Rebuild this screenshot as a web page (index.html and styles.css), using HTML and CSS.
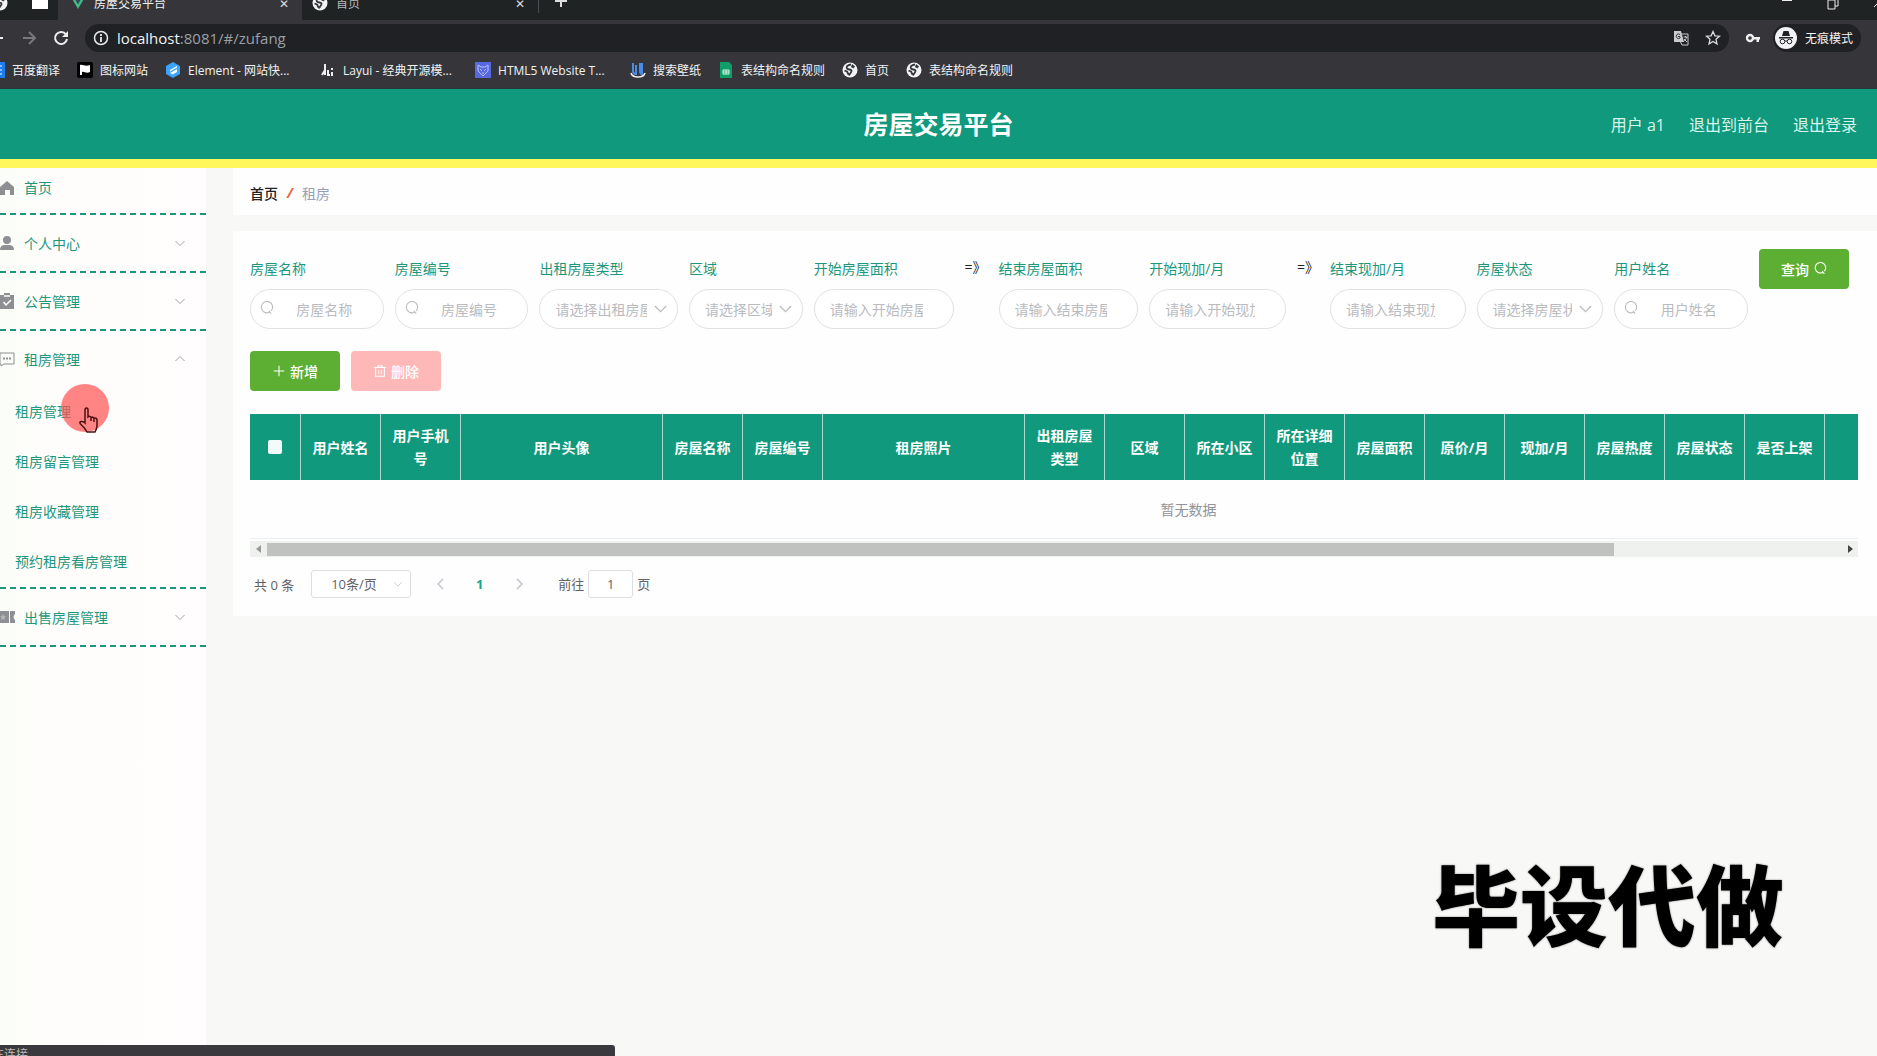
FILE: index.html
```html
<!DOCTYPE html>
<html lang="zh-CN">
<head>
<meta charset="utf-8">
<title>房屋交易平台</title>
<link rel="stylesheet" href="styles.css">
</head>
<body>
<svg class="sprite" aria-hidden="true">
  <symbol id="globe" viewBox="0 0 16 16"><circle cx="8" cy="8" r="7.500" fill="#f1f3f4"/><path d="M9 2.500C5 3 4 5 5 6.500s4 .5 4.500 2S8 11 7 13.500M2.500 8.500l2.500 1 1.500 3" fill="none" stroke="#35363a" stroke-width="1.800"/><path d="M10 2l3 2.500-1.500 2L9 5z" fill="#35363a"/></symbol>
  <symbol id="search" viewBox="0 0 16 16"><path d="M11 12A6 6 0 1 1 13 10.500M10.500 10.500l2.500 3" fill="none" stroke="currentColor" stroke-width="1.200"/></symbol>
  <symbol id="down" viewBox="0 0 12 12"><path d="M1.500 4L6 8.500 10.500 4" fill="none" stroke="currentColor"/></symbol>
  <symbol id="up" viewBox="0 0 12 12"><path d="M1.500 8L6 3.500 10.500 8" fill="none" stroke="currentColor"/></symbol>
</svg>

<div class="browser">
  <div class="tabstrip">
    <div class="tabrow">
      <div class="pinned"><svg class="ic16"><use href="#globe"/></svg><span class="divider"></span><svg class="ic16" viewBox="0 0 16 16"><path d="M0 2h6l1 2h9v10H0z" fill="#fff"/></svg></div>
      <div class="tab tab-active"><svg class="ic16" viewBox="0 0 16 16"><path d="M1 2h3l4 7 4-7h3L8 14z" fill="#41b883"/><path d="M4 2h2.500L8 5l1.500-3H12L8 9z" fill="#35495e"/></svg><span class="tab-title">房屋交易平台</span><button class="plain" aria-label="关闭标签">✕</button></div>
      <div class="tab"><svg class="ic16"><use href="#globe"/></svg><span class="tab-title dim">首页</span><button class="plain" aria-label="关闭标签">✕</button></div>
      <span class="divider"></span>
      <button class="plain newtab" aria-label="新标签页"><svg width="14" height="14" viewBox="0 0 14 14"><path d="M7 1v12M1 7h12" stroke="#ddd" stroke-width="2"/></svg></button>
      <div class="winbtns"><svg width="12" height="12" viewBox="0 0 12 12"><path d="M1 4h10" stroke="#eee" stroke-width="2"/></svg><svg width="12" height="14" viewBox="0 0 12 14"><path d="M1 4h7v9H1zM4 4V1h7v9H8" stroke="#eee" fill="none"/></svg><svg width="12" height="12" viewBox="0 0 12 12"><path d="M1 1l10 10M11 1L1 11" stroke="#eee"/></svg></div>
    </div>
  </div>
  <div class="toolbar">
    <svg class="nav back" viewBox="0 0 16 16"><path d="M14 8H2M8 2L2 8l6 6" stroke="#eee" stroke-width="2" fill="none"/></svg>
    <svg class="nav" viewBox="0 0 16 16"><path d="M2 8h12M8 2l6 6-6 6" stroke="#77797c" stroke-width="2" fill="none"/></svg>
    <svg class="nav" viewBox="0 0 16 16"><path d="M13 4.500A6 6 0 1 0 14 9" stroke="#eee" stroke-width="2" fill="none"/><path d="M15 1v6H9z" fill="#eee"/></svg>
    <div class="omnibox">
      <svg class="ic16" viewBox="0 0 16 16"><circle cx="8" cy="8" r="6.500" fill="none" stroke="#e8eaed" stroke-width="1.500"/><path d="M8 7v5M8 4v2" stroke="#e8eaed" stroke-width="1.800"/></svg>
      <span class="url"><b>localhost</b>:8081/#/zufang</span>
      <svg class="ic16" viewBox="0 0 16 16"><path d="M1 1h7l3 11H1z" fill="#c8cacd"/><path d="M8.500 4H15v11H9l-1.500-3" fill="none" stroke="#c8cacd"/><path d="M7 4.500A2.300 2.300 0 1 0 7 8V6.500H5" stroke="#35363a" fill="none"/><path d="M10.500 7h4M12.500 6v1M13.500 7c0 2-2 4-2.500 4M11 9l3 3" stroke="#c8cacd" fill="none"/></svg>
      <svg class="ic16" viewBox="0 0 16 16"><path d="M8 1.500l1.900 4.300 4.600.4-3.500 3.100 1 4.600L8 11.500l-4 2.400 1-4.600L1.500 6.200l4.600-.4z" fill="none" stroke="#dadce0" stroke-width="1.300"/></svg>
    </div>
    <svg class="ic16" viewBox="0 0 16 16"><circle cx="5" cy="8" r="3" fill="none" stroke="#eee" stroke-width="2.400"/><path d="M8 7h7v2.500h-1V12h-2.500V9.500H8z" fill="#eee"/></svg>
    <div class="incognito"><svg width="22" height="22" viewBox="0 0 22 22"><circle cx="11" cy="11" r="11" fill="#f1f3f4"/><path d="M7 9l1.500-5h5L15 9zM4 10h14v1.500H4z" fill="#202124"/><circle cx="7.500" cy="14.500" r="2.300" fill="none" stroke="#202124"/><circle cx="14.500" cy="14.500" r="2.300" fill="none" stroke="#202124"/><path d="M10 14h2" stroke="#202124"/></svg><span>无痕模式</span></div>
  </div>
  <nav class="bookmarks" aria-label="书签">
    <a href="#"><svg class="ic16" viewBox="0 0 16 16"><rect width="16" height="16" fill="#1a7df0"/><path d="M7 4h6M7 8h6M9 12h4" stroke="#fff"/></svg>百度翻译</a>
    <a href="#"><svg class="ic16" viewBox="0 0 16 16"><rect width="16" height="16" rx="2" fill="#000"/><path d="M3 13V3c3-1 5 2 10 0v7c-4 2-6-1-8 0v3z" fill="#fff"/></svg>图标网站</a>
    <a href="#" class="wide"><svg class="ic16" viewBox="0 0 16 16"><path d="M8 0l7 4v8l-7 4-7-4V4z" fill="#3ba4ff"/><path d="M12 4L5 8v1.500l7-4zM12 7l-7 4 2.500 1.500L12 10z" fill="#fff"/></svg>Element - 网站快...</a>
    <a href="#" class="wide"><svg class="ic16" viewBox="0 0 16 16"><path d="M5 2v11M2 13l3-5M8 13V8M12 6v2M12 10v4M7 13h3" stroke="#eee" stroke-width="2" fill="none"/></svg>Layui - 经典开源模...</a>
    <a href="#" class="wide"><svg class="ic16" viewBox="0 0 16 16"><rect width="16" height="16" fill="#5868e0"/><path d="M3 3l3 2h4l3-2v6l-5 5-5-5zM5 7l2 2M11 7L9 9M7 11h2" fill="none" stroke="#b7c4ff"/></svg>HTML5 Website T...</a>
    <a href="#"><svg class="ic16" viewBox="0 0 16 16"><path d="M3 1v8q0 3 3 3V3M10 1v8q0 3 2 3V1" stroke="#4b8be8" stroke-width="2" fill="none"/><path d="M1 11q1 4 7 4t7-4" stroke="#eee" stroke-width="1.500" fill="none"/></svg>搜索壁纸</a>
    <a href="#"><svg class="ic16" viewBox="0 0 16 16"><path d="M2 0h9l3 3v13H2z" fill="#0f9d68"/><path d="M5 8h6v4H5zM8 8v4M5 10h6" fill="none" stroke="#d8f5e8"/></svg>表结构命名规则</a>
    <a href="#"><svg class="ic16"><use href="#globe"/></svg>首页</a>
    <a href="#"><svg class="ic16"><use href="#globe"/></svg>表结构命名规则</a>
  </nav>
</div>

<header class="site-header">
  <h1>房屋交易平台</h1>
  <div class="user-links"><span>用户 a1</span><a href="#">退出到前台</a><a href="#">退出登录</a></div>
</header>

<div class="layout">
  <aside class="sidebar">
    <ul class="menu">
      <li class="menu-home"><a class="menu-title" href="#"><svg class="mi" viewBox="0 0 18 18"><path d="M9 3l7 6v8h-4v-5H7v5H2V9z" fill="#8d8f92"/></svg>首页</a></li>
      <li><a class="menu-title" href="#"><svg class="mi" viewBox="0 0 18 18"><circle cx="9" cy="6" r="4" fill="#8d8f92"/><path d="M2 16q0-5 5-5h4q5 0 5 5z" fill="#8d8f92"/></svg>个人中心<svg class="arrow"><use href="#down"/></svg></a></li>
      <li><a class="menu-title" href="#"><svg class="mi" viewBox="0 0 18 18"><path d="M2 3h4V1h6v2h4v14H2z" fill="#8d8f92"/><path d="M6 4h6M5.500 10l2.500 3 5-5" stroke="#fff" stroke-width="1.500" fill="none"/></svg>公告管理<svg class="arrow"><use href="#down"/></svg></a></li>
      <li><a class="menu-title" href="#"><svg class="mi" viewBox="0 0 18 18"><path d="M2 3h14v11H6l-3 2v-2H2z" fill="none" stroke="#8d8f92"/><path d="M5 8.500h2M8 8.500h2M11 8.500h2" stroke="#8d8f92" stroke-width="2"/></svg>租房管理<svg class="arrow"><use href="#up"/></svg></a>
        <ul class="submenu">
          <li><a href="#">租房管理</a></li>
          <li><a href="#">租房留言管理</a></li>
          <li><a href="#">租房收藏管理</a></li>
          <li><a href="#">预约租房看房管理</a></li>
        </ul></li>
      <li><a class="menu-title" href="#"><svg class="mi" viewBox="0 0 18 18"><path d="M0 3h11v12H0zM12 3h5v3q-3 3 0 6v3h-5z" fill="#8d8f92"/><path d="M5 6l1 2 2 .3-1.500 1.500.5 2.200-2-1-2 1 .5-2.200L2 8.300 4 8z" fill="#b5b5b8"/></svg>出售房屋管理<svg class="arrow"><use href="#down"/></svg></a></li>
    </ul>
  </aside>

  <main class="main">
    <nav class="crumbs" aria-label="面包屑"><a href="#">首页</a><i>/</i><span>租房</span></nav>
    <section class="panel">
      <form class="filters">
        <div class="field"><label for="f1">房屋名称</label><div class="box"><svg class="lead"><use href="#search"/></svg><input id="f1" class="with-icon" placeholder="房屋名称"></div></div>
        <div class="field"><label for="f2">房屋编号</label><div class="box"><svg class="lead"><use href="#search"/></svg><input id="f2" class="with-icon" placeholder="房屋编号"></div></div>
        <div class="field"><label for="f3">出租房屋类型</label><div class="box"><select id="f3"><option>请选择出租房屋类型</option></select><svg class="trail"><use href="#down"/></svg></div></div>
        <div class="field"><label for="f4">区域</label><div class="box"><select id="f4"><option>请选择区域</option></select><svg class="trail"><use href="#down"/></svg></div></div>
        <div class="field"><label for="f5">开始房屋面积</label><div class="box"><input id="f5" placeholder="请输入开始房屋面积"></div></div>
        <span class="to">=》</span>
        <div class="field"><label for="f6">结束房屋面积</label><div class="box"><input id="f6" placeholder="请输入结束房屋面积"></div></div>
        <div class="field"><label for="f7">开始现加/月</label><div class="box"><input id="f7" placeholder="请输入开始现加/月"></div></div>
        <span class="to">=》</span>
        <div class="field"><label for="f8">结束现加/月</label><div class="box"><input id="f8" placeholder="请输入结束现加/月"></div></div>
        <div class="field"><label for="f9">房屋状态</label><div class="box"><select id="f9"><option>请选择房屋状态</option></select><svg class="trail"><use href="#down"/></svg></div></div>
        <div class="field"><label for="f10">用户姓名</label><div class="box"><svg class="lead"><use href="#search"/></svg><input id="f10" class="with-icon" placeholder="用户姓名"></div></div>
        <button type="button" class="btn">查询<svg class="bi"><use href="#search"/></svg></button>
      </form>

      <div class="actions">
        <button type="button" class="btn"><svg class="bi" viewBox="0 0 16 16"><path d="M8 2v12M2 8h12" stroke="#fff" stroke-width="1.200"/></svg>新增</button>
        <button type="button" class="btn btn-danger" disabled><svg class="bi" viewBox="0 0 16 16"><path d="M1 4h14M3 4v10h10V4M5.500 4V2h5v2M6.500 7v4.500M9.500 7v4.500" fill="none" stroke="#fff" stroke-width="1.200"/></svg>删除</button>
      </div>

      <div class="table-wrap">
        <table>
          <colgroup><col class="c-check"><col><col><col class="c-pic"><col><col><col class="c-pic"><col><col><col><col><col><col><col><col><col><col><col class="c-ops"></colgroup>
          <thead><tr>
            <th><input type="checkbox" aria-label="全选"></th><th>用户姓名</th><th>用户手机号</th><th>用户头像</th><th>房屋名称</th><th>房屋编号</th><th>租房照片</th><th>出租房屋类型</th><th>区域</th><th>所在小区</th><th>所在详细位置</th><th>房屋面积</th><th>原价/月</th><th>现加/月</th><th>房屋热度</th><th>房屋状态</th><th>是否上架</th><th></th>
          </tr></thead>
          <tbody><tr><td colspan="18">暂无数据</td></tr></tbody>
        </table>
      </div>
      <div class="scrollbar"><span class="tri-left"></span><div class="track"><div class="thumb"></div></div><span class="tri-right"></span></div>

      <div class="pager">
        <span>共 0 条</span>
        <div class="size"><select aria-label="每页条数"><option>10条/页</option></select><svg><use href="#down"/></svg></div>
        <button class="page" aria-label="上一页"><svg width="12" height="12" viewBox="0 0 12 12"><path d="M8 1L3 6l5 5" fill="none" stroke="#c0c4cc" stroke-width="1.500"/></svg></button>
        <button class="page current">1</button>
        <button class="page" aria-label="下一页"><svg width="12" height="12" viewBox="0 0 12 12"><path d="M4 1l5 5-5 5" fill="none" stroke="#c0c4cc" stroke-width="1.500"/></svg></button>
        <label class="jump">前往<input value="1">页</label>
      </div>
    </section>
  </main>
</div>

<div class="caption">毕设代做</div>
<div class="status"><span>正在连接…</span></div>
<div class="pointer"><svg width="22" height="26" viewBox="0 0 22 26"><path d="M7 16V3q0-2 1.500-2T10 3v7q2-1.500 3 .5 2-1 3 .8 2.500-.8 3 1.200v6q0 3-2 6.500H9Q7 21 2.500 17q-1.500-2 .5-2.500T7 16zM13 11v3M16 12v3" fill="none" stroke="#4a1010" stroke-width="1.500"/></svg></div>
</body>
</html>
```
FILE: styles.css
```css
* { box-sizing: border-box; }
body {
  margin: 0;
  min-height: 100vh;
  display: flex;
  flex-direction: column;
  position: relative;
  overflow: hidden;
  background: #f8f9f7;
  font: 14px "Open Sans", "Noto Sans CJK SC", sans-serif;
  color: #606266;
}
a { color: inherit; text-decoration: none; }
button, input, select { font: inherit; margin: 0; }
ul { list-style: none; margin: 0; padding: 0; }
svg { flex: none; }
.sprite { position: absolute; width: 0; height: 0; }
.ic16 { width: 16px; height: 16px; }

/* browser chrome */
.browser { background: #36363a; color: #f1f3f4; font-size: 12px; border-bottom: 1px solid #26383a; }
.tabstrip { height: 20px; overflow: hidden; background: #202324; }
.tabrow { display: flex; align-items: center; height: 34px; margin-top: -14px; }
.pinned { display: flex; align-items: center; gap: 12px; width: 66px; margin-left: -8px; padding-right: 10px; }
.divider { width: 1px; height: 20px; background: #4a4c50; }
.tab { display: flex; align-items: center; gap: 8px; width: 236px; height: 34px; padding: 0 10px 0 10px; }
.tab-active { width: 244px; padding: 0 10px 0 12px; background: #36363a; border-radius: 8px 8px 0 0; }
.tab-title { flex: 1; }
.dim { color: #b5b8bc; }
.plain { border: 0; padding: 0; width: 16px; background: none; color: #ddd; font-size: 12px; }
.newtab { margin-left: 14px; }
.winbtns { display: flex; gap: 34px; margin-left: auto; margin-right: -8px; }
.toolbar { display: flex; align-items: center; height: 36px; padding: 0 16px 0 0; gap: 12px; }
.nav { width: 16px; height: 16px; }
.back { margin-left: -11px; }
.toolbar .nav + .nav { margin-left: 4px; margin-right: 0; }
.omnibox { flex: 1; display: flex; align-items: center; gap: 16px; height: 28px; margin: 0 4px 0 4px; padding: 0 8px; border-radius: 14px; background: #202124; }
.url { flex: 1; margin-left: -8px; font-size: 15px; line-height: 20px; color: #9aa0a6; }
.url b { font-weight: 400; color: #f1f3f4; }
.incognito { display: flex; align-items: center; gap: 8px; height: 28px; padding: 0 8px 0 2px; border-radius: 14px; background: #202124; }
.bookmarks { display: flex; gap: 17px; height: 32px; margin-left: -11px; padding-bottom: 4px; }
.bookmarks a { display: flex; align-items: center; gap: 7px; white-space: nowrap; }
.bookmarks .wide { width: 138px; }

/* site header */
.site-header { display: grid; grid-template-columns: 1fr auto 1fr; align-items: center; height: 79px; padding: 0 20px; background: #10997c; border-bottom: 9px solid #fff75c; color: #fff; }
.site-header h1 { grid-column: 2; margin: 0; font-size: 25px; line-height: 36px; }
.user-links { display: flex; justify-content: flex-end; gap: 24px; font-size: 16px; color: #d9f3ec; }

.layout { flex: 1; display: flex; align-items: stretch; }

/* sidebar */
.sidebar { flex: none; width: 206px; background: linear-gradient(90deg, #fbfdf8, #fffdfc 30%, #fffdfd); color: #1d977b; }
.menu > li { border-bottom: 2px dashed #1d977b; }
.menu-title { display: flex; align-items: center; height: 56px; padding: 0 20px 0 0; }
.menu-home .menu-title { height: 45px; padding-bottom: 8px; }
.mi { width: 18px; height: 18px; margin: 0 8px 0 -2px; }
.arrow { width: 12px; height: 12px; margin-left: auto; color: #a0a3a8; }
.submenu a { display: block; padding-left: 15px; line-height: 50px; }

/* content */
.main { flex: 1; min-width: 0; padding-left: 27px; }
.crumbs { display: flex; align-items: center; height: 47px; padding: 2px 17px 0; background: #fefefe; color: #97a0b3; }
.crumbs a { color: #222; font-weight: 500; }
.crumbs i { margin: 0 9px; font-weight: 700; color: #e8663c; }
.panel { margin-top: 16px; padding: 18px 19px 18px 17px; background: #fefefe; }
.filters { display: grid; grid-template-columns: 134fr 134fr 139fr 114fr 140fr 23px 140fr 137fr 22px 136fr 127fr 134fr 90px; column-gap: 11px; align-items: start; padding-right: 9px; }
.field { min-width: 0; color: #1d977b; }
.field label { display: block; line-height: 40px; white-space: nowrap; }
.to { line-height: 36px; color: #222; white-space: nowrap; }
.box { position: relative; }
.box input, .box select { display: block; width: 100%; height: 40px; padding: 0 30px 0 15px; border: 1px solid #dfe1e3; border-radius: 20px; background: #fff; color: #b9bbbf; appearance: none; outline: 0; }
.box .with-icon { padding: 0 15px 0 30px; text-align: center; }
.box input::placeholder { color: #b9bbbf; }
.lead, .trail { position: absolute; top: 12px; width: 15px; height: 15px; color: #b9bbbf; pointer-events: none; }
.lead { left: 9px; }
.trail { right: 10px; }
.btn { display: flex; align-items: center; justify-content: center; gap: 4px; width: 90px; height: 40px; padding: 0; border: 0; border-radius: 4px; background: #5daf34; color: #fff; font-weight: 500; }
.btn-danger { background: #ffb8b8; }
.bi { width: 14px; height: 14px; }
.actions { display: flex; gap: 11px; margin: 22px 0 23px; }

.table-wrap { overflow: hidden; height: 127px; }
table { width: 1877px; table-layout: fixed; border-collapse: separate; border-spacing: 0; }
col { width: 80px; }
.c-check { width: 51px; }
.c-pic { width: 202px; }
.c-ops { width: auto; }
th { height: 66px; padding: 0 10px; border-right: 1px solid #a9dccf; background: #10997c; color: #fff; line-height: 23px; text-align: center; }
th input { display: block; width: 14px; height: 14px; margin: 0 auto; appearance: none; background: #f2fbf9; border-radius: 2px; }
td { height: 59px; padding: 0; border-bottom: 1px solid #ebeeef; text-align: center; color: #909399; }
.scrollbar { display: flex; align-items: center; height: 16px; padding: 0 5px 0 6px; background: #eff1ef; }
.track { flex: 1; margin: 0 7px 0 6px; }
.thumb { width: 85.6%; height: 13px; background: #c0c2c0; }
.tri-left, .tri-right { border: 4px solid transparent; }
.tri-left { border-left: 0; border-right: 5px solid #999; }
.tri-right { border-right: 0; border-left: 5px solid #444; }

.pager { display: flex; align-items: center; height: 28px; margin-top: 13px; padding-left: 4px; font-size: 13px; }
.size { position: relative; width: 100px; margin: 0 15px 0 17px; }
.size select { width: 100%; height: 28px; padding: 0 26px 0 19px; border: 1px solid #dcdfe2; border-radius: 3px; background: #fff; color: #606266; appearance: none; }
.size svg { position: absolute; right: 8px; top: 9px; width: 10px; height: 10px; color: #c0c4cc; }
.page { display: flex; align-items: center; justify-content: center; width: 29px; height: 28px; margin-right: 10px; padding: 0; border: 0; background: none; font-weight: 700; }
.current { color: #18a884; }
.jump { margin-left: 15px; }
.jump input { width: 45px; height: 28px; margin: 0 4px; padding: 0; border: 1px solid #dcdfe2; border-radius: 3px; text-align: center; color: #606266; background: #fff; }

/* overlays */
.caption { position: absolute; right: 93px; bottom: 87px; font-size: 88px; line-height: 128px; font-weight: 900; color: #000; text-shadow: 0 0 2px #777; }
.status { position: absolute; left: 0; bottom: 0; width: 615px; height: 11px; overflow: hidden; background: #3a393d; border-radius: 0 3px 0 0; color: #bbb; font-size: 12px; line-height: 20px; }
.status span { margin-left: -20px; }
.pointer { position: absolute; left: 61px; top: 384px; width: 48px; height: 48px; padding: 23px 0 0 17px; border-radius: 50%; background: rgba(255, 80, 80, .7); }
```
